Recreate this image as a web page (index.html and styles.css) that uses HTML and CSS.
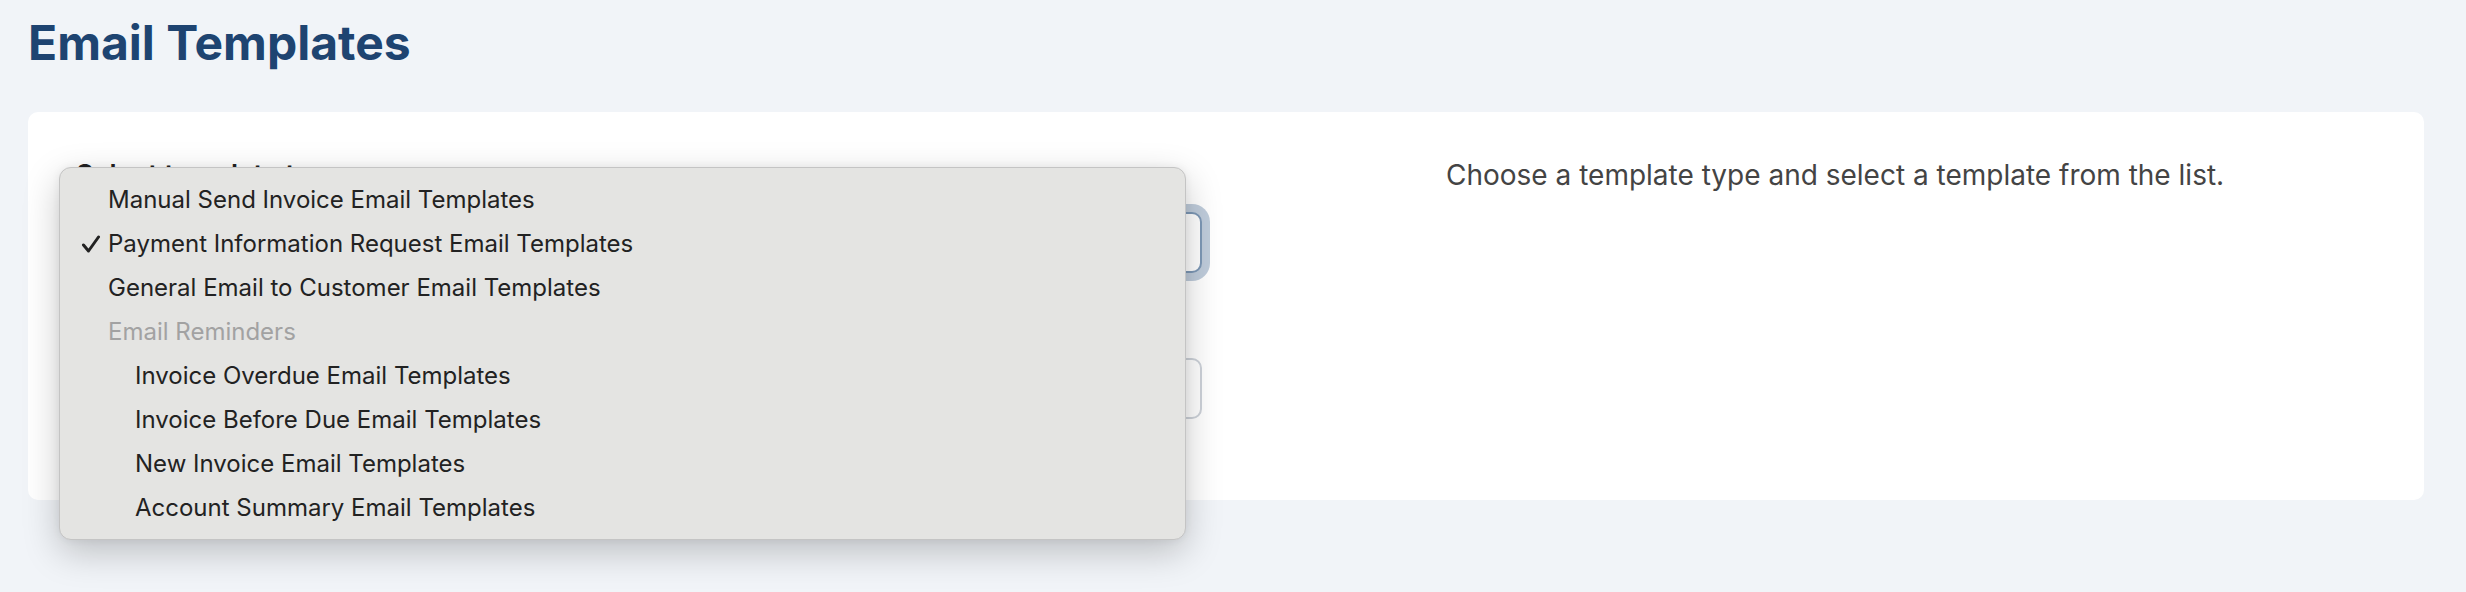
FILE: index.html
```html
<!DOCTYPE html>
<html lang="en">
<head>
    <meta charset="UTF-8">
    <title>Email Templates</title>
    <link rel="stylesheet" href="styles.css">
</head>
<body>
    <div class="page">
        <h1 class="page-title">Email Templates</h1>

        <div class="card">
            <div class="form-col">
                <label class="field-label">Select template type</label>
                <div class="select-box focused"></div>

                <label class="field-label second">Select template</label>
                <div class="select-box"></div>

                <!-- native popup menu, open over the type select -->
                <div class="menu">
                    <div class="menu-item">Manual Send Invoice Email Templates</div>
                    <div class="menu-item checked">
                        <svg class="check" viewBox="0 0 20 18" width="20" height="18">
                            <path d="M2.5 10 L7.5 16 L17.5 2" fill="none" stroke="#222" stroke-width="3" stroke-linecap="round" stroke-linejoin="round"/>
                        </svg>
                        Payment Information Request Email Templates
                    </div>
                    <div class="menu-item">General Email to Customer Email Templates</div>
                    <div class="menu-item group">Email Reminders</div>
                    <div class="menu-item sub">Invoice Overdue Email Templates</div>
                    <div class="menu-item sub">Invoice Before Due Email Templates</div>
                    <div class="menu-item sub">New Invoice Email Templates</div>
                    <div class="menu-item sub">Account Summary Email Templates</div>
                </div>
            </div>

            <div class="help-col">
                <p>Choose a template type and select a template from the list.</p>
            </div>
        </div>
    </div>
</body>
</html>
```

FILE: styles.css
```css
html, body {
    margin: 0;
    background-color: #f1f4f8;
    font-family: Inter, "Noto Sans", sans-serif;
}
.page {
    box-sizing: border-box;
    min-height: 100vh;
    padding: 12px 42px 0 28px;
}
.page-title {
    margin: 0 0 39px 0;
    font-size: 48px;
    line-height: 61px;
    font-weight: 700;
    color: #1e4471;
}
.card {
    background-color: white;
    border-radius: 10px;
    padding: 47px 48px 81px 48px;
    display: grid;
    grid-template-columns: 1126px 1fr;
    column-gap: 244px;
}
.form-col {
    position: relative;
    display: flex;
    flex-direction: column;
}
.field-label {
    font-size: 27px;
    line-height: 32px;
    font-weight: 600;
    color: #222;
    margin-bottom: 21px;
}
.field-label.second {
    margin-top: 32px;
}
.select-box {
    height: 57px;
    border: 2px solid #cdd2d9;
    border-radius: 10px;
    background-color: white;
}
.select-box.focused {
    border-color: #7d98b6;
    box-shadow: 0 0 0 8px #bfccdb;
}
.help-col p {
    margin: 0;
    font-size: 28px;
    line-height: 32px;
    color: #444;
}
.menu {
    position: absolute;
    left: -17px;
    top: 8px;
    width: 1125px;
    padding: 10px 0 9px 0;
    background-color: #e4e4e2;
    border: 1px solid #c4c4c4;
    border-radius: 12px;
    box-shadow: 0 12px 36px rgba(0, 0, 0, 0.22), 0 0 8px rgba(0, 0, 0, 0.06);
    z-index: 10;
}
.menu-item {
    position: relative;
    height: 44px;
    line-height: 44px;
    padding-left: 48px;
    font-size: 24px;
    color: #222;
    white-space: nowrap;
}
.menu-item.group {
    color: #a2a2a2;
}
.menu-item.sub {
    padding-left: 75px;
}
.check {
    position: absolute;
    left: 21px;
    top: 13px;
}
```
